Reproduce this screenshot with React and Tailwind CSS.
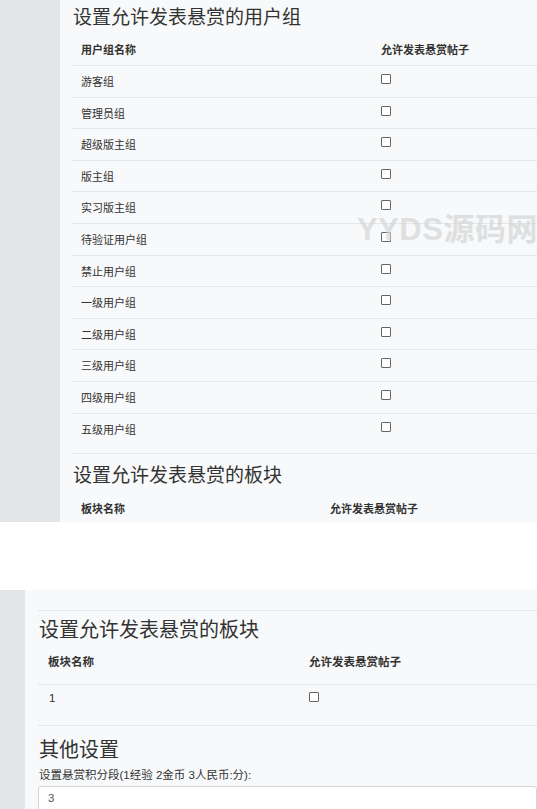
import React from "react";

const groups = [
  "游客组",
  "管理员组",
  "超级版主组",
  "版主组",
  "实习版主组",
  "待验证用户组",
  "禁止用户组",
  "一级用户组",
  "二级用户组",
  "三级用户组",
  "四级用户组",
  "五级用户组",
];

function Box({ className = "" }) {
  return (
    <span
      className={
        "block w-[10px] h-[10px] border border-[#666] bg-white rounded-[1px] " +
        className
      }
    />
  );
}

export default function App() {
  return (
    <div
      className="w-[537px] h-[809px] bg-white overflow-hidden text-[#333]"
      style={{ fontFamily: '"Liberation Sans", "Noto Sans CJK SC", sans-serif' }}
    >
      {/* Top screenshot */}
      <div className="flex h-[522px] overflow-hidden">
        <div className="w-[60px] shrink-0 bg-[#e3e5e8]" />
        <div className="relative flex-1 bg-[#f8f9fa] pl-[11px]">
          <h2 className="mt-[7px] ml-[2px] text-[19px] leading-[22px] font-normal text-[#333]">
            设置允许发表悬赏的用户组
          </h2>
          <div className="mt-[3.5px]">
            <div className="flex h-[32.5px] text-[11px] leading-[15px] font-bold">
              <div className="w-[310px] pl-[10px] pt-[10px]">用户组名称</div>
              <div className="pt-[10px]">允许发表悬赏帖子</div>
            </div>
            {groups.map((g) => (
              <div
                key={g}
                className="flex h-[31.6px] border-t border-[#e4e6e9] text-[11px] leading-[15px]"
              >
                <div className="w-[310px] pl-[10px] pt-[9px]">{g}</div>
                <div className="pt-[8px]">
                  <Box />
                </div>
              </div>
            ))}
          </div>
          <div className="mt-[9px] border-t border-[#e4e6e9]" />
          <h2 className="mt-[11px] ml-[2px] text-[19px] leading-[22px] font-normal text-[#333]">
            设置允许发表悬赏的板块
          </h2>
          <div className="flex h-[32.5px] mt-[5.5px] text-[11px] leading-[15px] font-bold">
            <div className="w-[259px] pl-[10px] pt-[9px]">板块名称</div>
            <div className="pt-[9px]">允许发表悬赏帖子</div>
          </div>
          <div className="pointer-events-none absolute left-[297px] top-[213px] text-[31px] leading-[33px] font-bold tracking-[0.5px] text-[#d4d5d6] opacity-70 whitespace-nowrap">
            YYDS源码网
          </div>
        </div>
      </div>

      {/* White gap */}
      <div className="h-[68px] bg-white" />

      {/* Bottom screenshot */}
      <div className="flex h-[219px] overflow-hidden">
        <div className="w-[25px] shrink-0 bg-[#e3e5e8]" />
        <div className="flex-1 bg-[#f8f9fa] pl-[13px] pt-[20px]">
          <div className="border-t border-[#e4e6e9]" />
          <h2 className="mt-[7px] ml-[1px] text-[20px] leading-[24px] font-normal text-[#333]">
            设置允许发表悬赏的板块
          </h2>
          <div className="flex h-[42px] text-[11.5px] leading-[15px] font-bold">
            <div className="w-[271px] pl-[10px] pt-[13px]">板块名称</div>
            <div className="pt-[13px]">允许发表悬赏帖子</div>
          </div>
          <div className="flex h-[31.5px] border-t border-[#e4e6e9] text-[11.5px] leading-[15px]">
            <div className="w-[271px] pl-[11px] pt-[6px]">1</div>
            <div className="pt-[7px]">
              <Box />
            </div>
          </div>
          <div className="mt-[9.5px] border-t border-[#e4e6e9]" />
          <h2 className="mt-[12px] ml-[1px] text-[20px] leading-[24px] font-normal text-[#333]">
            其他设置
          </h2>
          <div className="mt-[5.5px] ml-[1px] text-[11.5px] leading-[15px] text-[#333]">
            设置悬赏积分段(1经验 2金币 3人民币:分):
          </div>
          <div className="mt-[3.5px] h-[32px] bg-white border border-[#d4d6d9] rounded-[3px] pl-[9px] pt-[4px] text-[11.5px] leading-[15px] text-[#555]">
            3
          </div>
        </div>
      </div>
    </div>
  );
}
